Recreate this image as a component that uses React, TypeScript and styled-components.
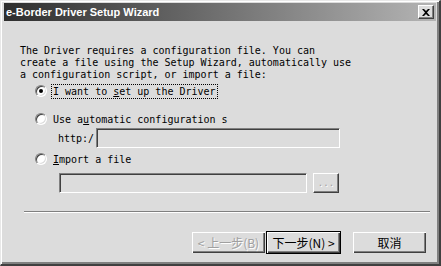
import React from 'react';
import styled, { createGlobalStyle } from 'styled-components';

const Global = createGlobalStyle`
    html, body { margin: 0; padding: 0; background: #dcdcdc; }
`;

const Window = styled.div`
    width: 441px;
    height: 266px;
    box-sizing: border-box;
    background: #dcdcdc;
    border-top: 1px solid #e8e8e8;
    border-left: 1px solid #e8e8e8;
    border-right: 2px solid #404040;
    border-bottom: 2px solid #404040;
    box-shadow: inset 1px 1px 0 #fff, inset -2px -2px 0 #808080;
    padding: 2px 3px 0 3px;
    display: flex;
    flex-direction: column;
    font-family: "DejaVu Sans Mono", "Liberation Mono", monospace;
    font-size: 10px;
    color: #000;
`;

const TitleBar = styled.div`
    height: 18px;
    display: flex;
    align-items: center;
    justify-content: space-between;
    padding: 0 2px 0 2px;
    background: linear-gradient(to right, #2e2e2e 0%, #6a6a6a 45%, #b4b4b4 100%);
    color: #fff;
    font-family: "Liberation Sans", Arial, sans-serif;
    font-weight: bold;
    font-size: 11px;
`;

const CloseBox = styled.div`
    width: 16px;
    height: 14px;
    box-sizing: border-box;
    background: #dcdcdc;
    border-top: 1px solid #fff;
    border-left: 1px solid #fff;
    border-right: 1px solid #404040;
    border-bottom: 1px solid #404040;
    box-shadow: inset -1px -1px 0 #808080;
    display: flex;
    align-items: center;
    justify-content: center;
`;

const Body = styled.div`
    flex: 1;
    display: flex;
    flex-direction: column;
    padding: 24px 0 0 16px;
`;

const Intro = styled.p`
    margin: 0;
    line-height: 12px;
    white-space: pre;
`;

const Options = styled.div`
    display: flex;
    flex-direction: column;
    align-items: flex-start;
    padding-left: 15px;
    margin-top: 2px;
`;

const OptionRow = styled.label<{ gap?: number }>`
    display: flex;
    align-items: center;
    height: 16px;
    margin-top: ${p => p.gap ?? 0}px;
`;

const Radio = styled.span<{ checked?: boolean }>`
    flex: 0 0 12px;
    height: 12px;
    box-sizing: border-box;
    border-radius: 50%;
    background: #fff;
    border: 1px solid;
    border-color: #808080 #fff #fff #808080;
    box-shadow: inset 1px 1px 0 #404040, inset -1px -1px 0 #dcdcdc;
    position: relative;
    margin-right: 5px;
    &::after {
        content: '';
        display: ${p => (p.checked ? 'block' : 'none')};
        position: absolute;
        left: 3px;
        top: 3px;
        width: 4px;
        height: 4px;
        border-radius: 50%;
        background: #000;
    }
`;

const Label = styled.span<{ focused?: boolean; clip?: number }>`
    padding: 1px 1px;
    outline: ${p => (p.focused ? '1px dotted #000' : 'none')};
    white-space: nowrap;
    overflow: hidden;
    ${p => (p.clip ? `width: ${p.clip}px;` : '')}
    u { text-decoration: underline; }
`;

const FieldRow = styled.div<{ indent: number; top: number }>`
    display: flex;
    align-items: center;
    padding-left: ${p => p.indent}px;
    margin-top: ${p => p.top}px;
    height: 20px;
`;

const Prefix = styled.span`
    flex: 0 0 38px;
`;

const Input = styled.div<{ w: number }>`
    flex: 0 0 ${p => p.w}px;
    height: 20px;
    box-sizing: border-box;
    background: #dcdcdc;
    border-top: 1px solid #808080;
    border-left: 1px solid #808080;
    border-right: 1px solid #fff;
    border-bottom: 1px solid #fff;
    box-shadow: inset 1px 1px 0 #404040, inset -1px -1px 0 #dcdcdc;
`;

const SmallBtn = styled.div`
    flex: 0 0 26px;
    height: 20px;
    margin-left: 6px;
    box-sizing: border-box;
    border-top: 1px solid #fff;
    border-left: 1px solid #fff;
    border-right: 1px solid #404040;
    border-bottom: 1px solid #404040;
    box-shadow: inset -1px -1px 0 #808080;
    color: #a0a0a0;
    text-shadow: 1px 1px 0 #fff;
    display: flex;
    align-items: center;
    justify-content: center;
    font-size: 9px;
`;

const Separator = styled.div`
    margin: 18px 6px 0 4px;
    height: 0;
    border-top: 1px solid #808080;
    border-bottom: 1px solid #fff;
`;

const ButtonBar = styled.div`
    display: flex;
    justify-content: flex-end;
    padding: 18px 9px 0 0;
`;

const Button = styled.div<{ disabled?: boolean; primary?: boolean; space?: number }>`
    width: 75px;
    height: 23px;
    box-sizing: border-box;
    margin-left: ${p => p.space ?? 0}px;
    display: flex;
    align-items: center;
    justify-content: center;
    font-family: "Noto Sans CJK SC", sans-serif;
    font-size: 12px;
    color: ${p => (p.disabled ? '#a0a0a0' : '#000')};
    text-shadow: ${p => (p.disabled ? '1px 1px 0 #fff' : 'none')};
    border: 1px solid ${p => (p.primary ? '#000' : 'transparent')};
    box-shadow: inset 1px 1px 0 #fff, inset -1px -1px 0 #404040, inset -2px -2px 0 #808080;
`;

const App = () => {
    return (
        <>
            <Global />
            <Window>
                <TitleBar>
                    <span>e-Border Driver Setup Wizard</span>
                    <CloseBox>
                        <svg width="8" height="7" viewBox="0 0 8 7">
                            <path d="M0 0h2l2 2 2-2h2L5 3.5 8 7H6L4 5 2 7H0l3-3.5z" fill="#000" />
                        </svg>
                    </CloseBox>
                </TitleBar>
                <Body>
                    <Intro>{'The Driver requires a configuration file. You can\ncreate a file using the Setup Wizard, automatically use\na configuration script, or import a file:'}</Intro>
                    <Options>
                        <OptionRow>
                            <Radio checked />
                            <Label focused>I want to <u>s</u>et up the Driver</Label>
                        </OptionRow>
                        <OptionRow gap={12}>
                            <Radio />
                            <Label clip={176}>Use a<u>u</u>tomatic configuration s</Label>
                        </OptionRow>
                        <FieldRow indent={23} top={1}>
                            <Prefix>http:/</Prefix>
                            <Input w={244} />
                        </FieldRow>
                        <OptionRow gap={3}>
                            <Radio />
                            <Label><u>I</u>mport a file</Label>
                        </OptionRow>
                        <FieldRow indent={24} top={6}>
                            <Input w={248} />
                            <SmallBtn>...</SmallBtn>
                        </FieldRow>
                    </Options>
                    <Separator />
                    <ButtonBar>
                        <Button disabled>&lt; 上一步(B)</Button>
                        <Button primary>下一步(N) &gt;</Button>
                        <Button space={11}>取消</Button>
                    </ButtonBar>
                </Body>
            </Window>
        </>
    );
};

export default App;
